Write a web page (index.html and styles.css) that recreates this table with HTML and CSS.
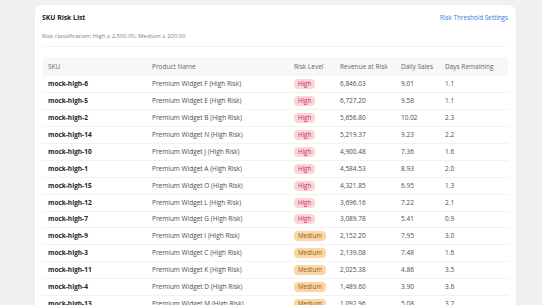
FILE: index.html
```html
<!DOCTYPE html>
<html lang="en">
<head>
<meta charset="utf-8">
<title>SKU Risk List</title>
<link rel="stylesheet" href="styles.css">
</head>
<body>
<div class="card">
  <div class="card-head">
    <h1 class="title">SKU Risk List</h1>
    <a class="link" href="#">Risk Threshold Settings</a>
  </div>
  <p class="subtitle">Risk classification: High ≥ 2,500.00, Medium ≥ 200.00</p>
  <table class="risk-table">
    <colgroup>
      <col class="c-sku"><col class="c-name"><col class="c-level"><col class="c-rev"><col class="c-daily"><col class="c-days">
    </colgroup>
    <thead>
      <tr><th>SKU</th><th>Product Name</th><th>Risk Level</th><th>Revenue at Risk</th><th>Daily Sales</th><th>Days Remaining</th></tr>
    </thead>
    <tbody>
      <tr><td class="sku">mock-high-6</td><td>Premium Widget F (High Risk)</td><td><span class="badge high">High</span></td><td>6,846.03</td><td>9.01</td><td>1.1</td></tr>
      <tr><td class="sku">mock-high-5</td><td>Premium Widget E (High Risk)</td><td><span class="badge high">High</span></td><td>6,727.20</td><td>9.58</td><td>1.1</td></tr>
      <tr><td class="sku">mock-high-2</td><td>Premium Widget B (High Risk)</td><td><span class="badge high">High</span></td><td>5,656.80</td><td>10.02</td><td>2.3</td></tr>
      <tr><td class="sku">mock-high-14</td><td>Premium Widget N (High Risk)</td><td><span class="badge high">High</span></td><td>5,219.37</td><td>9.23</td><td>2.2</td></tr>
      <tr><td class="sku">mock-high-10</td><td>Premium Widget J (High Risk)</td><td><span class="badge high">High</span></td><td>4,900.48</td><td>7.36</td><td>1.6</td></tr>
      <tr><td class="sku">mock-high-1</td><td>Premium Widget A (High Risk)</td><td><span class="badge high">High</span></td><td>4,584.53</td><td>8.93</td><td>2.0</td></tr>
      <tr><td class="sku">mock-high-15</td><td>Premium Widget O (High Risk)</td><td><span class="badge high">High</span></td><td>4,321.85</td><td>6.95</td><td>1.3</td></tr>
      <tr><td class="sku">mock-high-12</td><td>Premium Widget L (High Risk)</td><td><span class="badge high">High</span></td><td>3,696.16</td><td>7.22</td><td>2.1</td></tr>
      <tr><td class="sku">mock-high-7</td><td>Premium Widget G (High Risk)</td><td><span class="badge high">High</span></td><td>3,089.78</td><td>5.41</td><td>0.9</td></tr>
      <tr><td class="sku">mock-high-9</td><td>Premium Widget I (High Risk)</td><td><span class="badge medium">Medium</span></td><td>2,152.20</td><td>7.95</td><td>3.0</td></tr>
      <tr><td class="sku">mock-high-3</td><td>Premium Widget C (High Risk)</td><td><span class="badge medium">Medium</span></td><td>2,139.08</td><td>7.48</td><td>1.6</td></tr>
      <tr><td class="sku">mock-high-11</td><td>Premium Widget K (High Risk)</td><td><span class="badge medium">Medium</span></td><td>2,025.38</td><td>4.86</td><td>3.5</td></tr>
      <tr><td class="sku">mock-high-4</td><td>Premium Widget D (High Risk)</td><td><span class="badge medium">Medium</span></td><td>1,489.60</td><td>3.90</td><td>3.6</td></tr>
      <tr><td class="sku">mock-high-13</td><td>Premium Widget M (High Risk)</td><td><span class="badge medium">Medium</span></td><td>1,092.96</td><td>5.08</td><td>3.7</td></tr>
    </tbody>
  </table>
</div>
</body>
</html>
```
FILE: styles.css
```css
html, body {
  margin: 0;
  padding: 0;
  background: #f0f0f0;
  font-family: "Open Sans", "Noto Sans", sans-serif;
  color: #444;
}
body {
  padding: 5px 26px 0 35px;
}
.card {
  background: #fff;
  border-radius: 8px;
  padding: 8px 8px 0 7px;
  height: 400px;
}
.card-head {
  display: flex;
  justify-content: space-between;
  align-items: center;
  height: 10px;
}
.title {
  margin: 0;
  font-size: 6.8px;
  font-weight: 700;
  color: #222;
  line-height: 10px;
}
.link {
  font-size: 6.3px;
  color: #2f7be0;
  text-decoration: none;
  line-height: 10px;
}
.subtitle {
  margin: 8px 0 0;
  font-size: 5.9px;
  line-height: 10px;
  color: #808080;
  padding-bottom: 5px;
  border-bottom: 1px solid #f3f3f3;
}
.risk-table {
  margin-top: 10px;
  width: 466px;
  border-collapse: collapse;
  table-layout: fixed;
  font-size: 6.5px;
}
.c-sku { width: 104px; }
.c-name { width: 142px; }
.c-level { width: 46px; }
.c-rev { width: 61px; }
.c-daily { width: 44px; }
.c-days { width: 69px; }
.risk-table th {
  background: #f7f7f7;
  font-weight: 400;
  color: #666;
  text-align: left;
  height: 19px;
  padding: 0 6px;
  line-height: 10px;
  white-space: nowrap;
}
.risk-table thead th:first-child { border-radius: 4px 0 0 0; }
.risk-table thead th:last-child { border-radius: 0 4px 0 0; }
.risk-table td {
  height: 15.95px;
  padding: 0 6px;
  border-bottom: 1px solid #f2f2f2;
  color: #4a4a4a;
  line-height: 10px;
  white-space: nowrap;
}
.risk-table td.sku {
  font-weight: 700;
  color: #222;
}
.badge {
  display: inline-block;
  padding: 0 4px;
  border-radius: 4px;
  line-height: 10px;
  font-size: 6.2px;
}
.badge.high {
  background: #fdd3dc;
  color: #b8324a;
}
.badge.medium {
  background: #fdd7a3;
  color: #8a5a12;
}
```
